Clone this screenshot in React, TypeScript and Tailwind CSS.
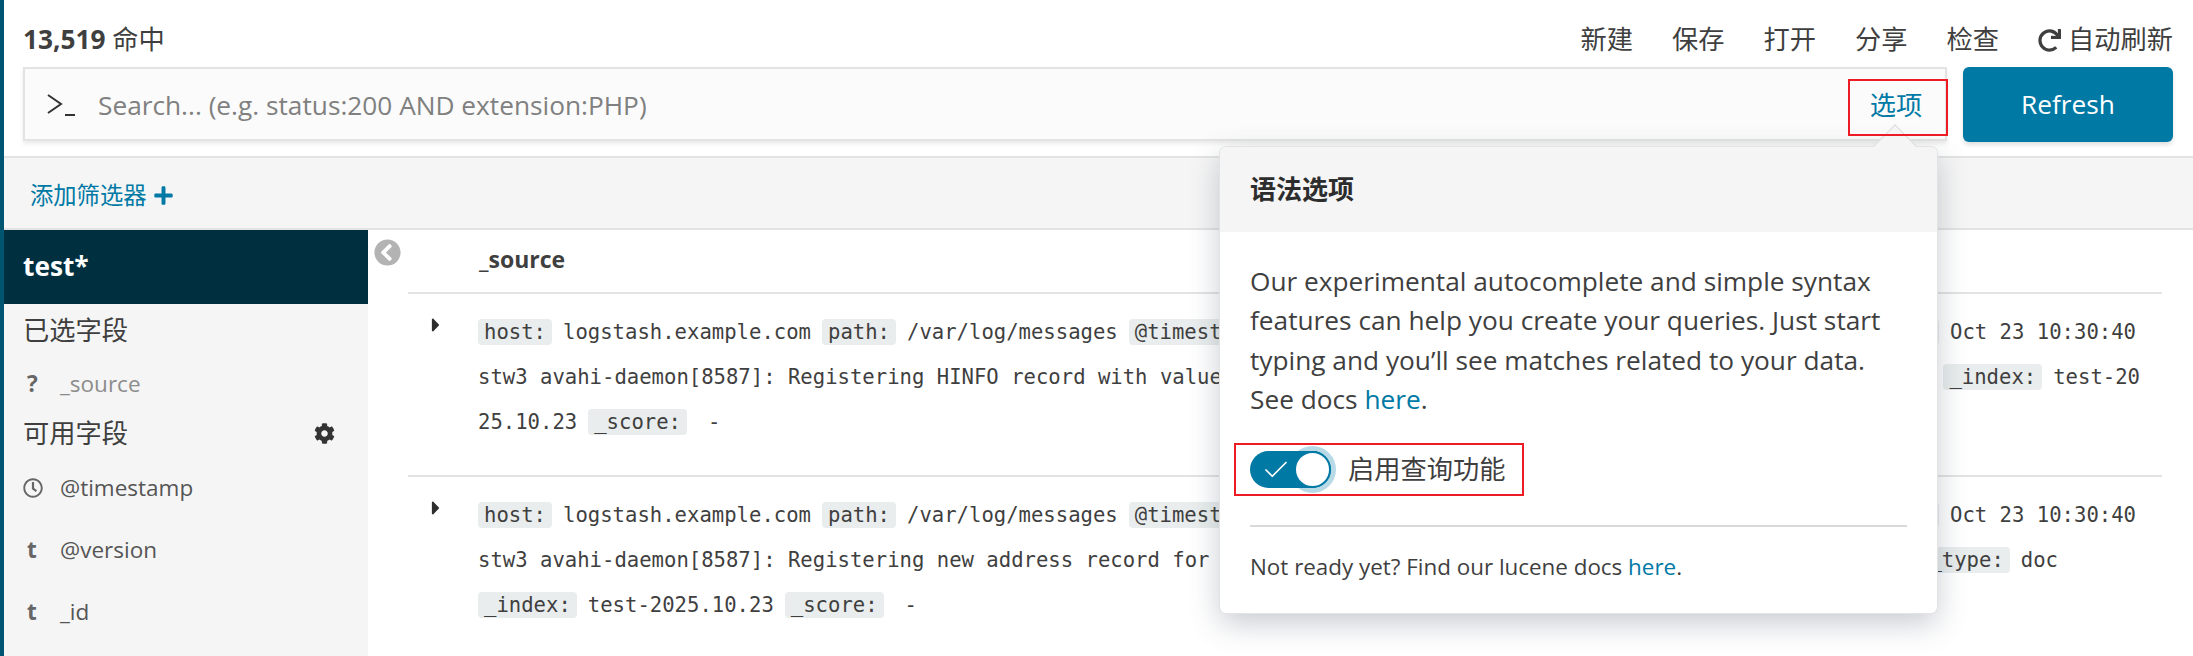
import { ReactNode } from "react"
import { Check } from "lucide-react"
import { FaCaretRight, FaChevronCircleLeft, FaCog, FaPlus, FaRedo, FaRegClock } from "react-icons/fa"

const sans = "font-['Open_Sans','Noto_Sans_CJK_SC',sans-serif]"

function Tag({ children }: { children: ReactNode }) {
  return <span className="mr-[11px] inline-flex h-[26px] items-center rounded-[4px] bg-[#e9eded] px-[6px]">{children}</span>
}

function Val({ children }: { children: ReactNode }) {
  return <span className="mr-[11px]">{children}</span>
}

function Line({ children, right, rightClass = "mr-[26px]" }: { children: ReactNode; right?: ReactNode; rightClass?: string }) {
  return (
    <div className="flex h-[45px] items-center justify-between whitespace-pre">
      <div className="flex items-center">{children}</div>
      {right && <div className={`flex items-center ${rightClass}`}>{right}</div>}
    </div>
  )
}

function Row({ children }: { children: ReactNode }) {
  return (
    <div className="flex border-b-2 border-[#e3e3e3] pt-[16px] pb-[30px]">
      <div className="w-[70px] pl-[20px] pt-[4px]">
        <FaCaretRight className="h-[22px] w-[16px] text-[#2d2d2d]" />
      </div>
      <div className="flex-1 font-['DejaVu_Sans_Mono',monospace] text-[20.6px] text-[#3f3f3f]">{children}</div>
    </div>
  )
}

function FieldItem({ icon, name, className }: { icon: ReactNode; name: string; className: string }) {
  return (
    <div className={`flex items-center pl-[23px] text-[22.5px] ${className}`}>
      <span className="flex w-[37px] items-center pl-[4px] font-bold text-[#666]">{icon}</span>
      <span>{name}</span>
    </div>
  )
}

export default function App() {
  return (
    <div className={`flex h-[656px] w-[2193px] overflow-hidden bg-white text-[#3f3f3f] ${sans}`}>
      <div className="w-[4px] shrink-0 bg-[#005571]" />
      <div className="relative flex min-w-0 flex-1 flex-col">
        <div className="h-[158px] shrink-0 border-b-2 border-[#e3e3e3] pl-[19px] pr-[20px]">
          <div className="flex h-[67px] items-center justify-between pt-[13px]">
            <div className="text-[26.25px]">
              <span className="font-bold">13,519</span> 命中
            </div>
            <div className="flex items-center gap-[39px] text-[26.25px]">
              <span>新建</span>
              <span>保存</span>
              <span>打开</span>
              <span>分享</span>
              <span>检查</span>
              <span className="flex items-center gap-[8px]">
                <FaRedo className="h-[23px] w-[23px]" />
                <span className="-ml-[1px]">自动刷新</span>
              </span>
            </div>
          </div>
          <div className="flex gap-[16px]">
            <div className="flex h-[74px] flex-1 items-center justify-between border-2 border-[#e3e3e3] bg-[#fbfbfb] pl-[22px] shadow-[0_3px_4px_rgba(0,0,0,0.08)]">
              <div className="flex items-center">
                <svg width="28" height="26" viewBox="0 0 28 26" fill="none" stroke="#333" strokeWidth="2">
                  <path d="M1 4 L14 13 L1 22" />
                  <path d="M18 24 H28" />
                </svg>
                <span className="ml-[23px] pt-[4px] text-[26.25px] text-[#808080]">Search... (e.g. status:200 AND extension:PHP)</span>
              </div>
              <div className="relative top-[3px] z-20 -mr-[3px] flex h-[57px] w-[100px] items-center justify-center border-2 border-[#ed1c24] pb-[3px] pr-[4px] text-[26.25px] text-[#0079a5]">
                选项
              </div>
            </div>
            <button className="h-[75px] w-[210px] rounded-[6px] bg-[#0079a5] text-[26.25px] text-white shadow-[0_3px_4px_rgba(0,0,0,0.12)]">Refresh</button>
          </div>
        </div>

        <div className="flex h-[72px] shrink-0 items-center gap-[7px] border-b-2 border-[#e3e3e3] bg-[#f5f5f5] pl-[26px] pt-[4px] text-[23.3px] text-[#0079a5]">
          添加筛选器
          <FaPlus className="h-[21px] w-[21px]" />
        </div>

        <div className="relative flex min-h-0 flex-1">
          <div className="w-[364px] shrink-0 bg-[#f5f5f5]">
            <div className="flex h-[74px] items-center bg-[#00303f] pl-[19px] text-[26.25px] font-bold text-white">test*</div>
            <div className="pl-[19px] pt-[7px] text-[26.25px]">已选字段</div>
            <div className="-ml-[4px] mt-[17px]">
              <FieldItem icon="?" name="_source" className="text-[#8c8c8c]" />
            </div>
            <div className="flex items-center justify-between pl-[19px] pr-[33px] pt-[13px] text-[26.25px]">
              可用字段
              <FaCog className="h-[21px] w-[21px] text-[#333]" />
            </div>
            <div className="-ml-[4px] mt-[17px] flex flex-col gap-[28px] text-[#555]">
              <FieldItem icon={<FaRegClock className="-ml-[4px] h-[20px] w-[20px]" />} name="@timestamp" className="h-[34px]" />
              <FieldItem icon="t" name="@version" className="h-[34px]" />
              <FieldItem icon="t" name="_id" className="h-[34px]" />
            </div>
          </div>

          <div className="relative min-w-0 flex-1 pl-[40px] pr-[31px]">
            <FaChevronCircleLeft className="absolute left-[6px] top-[9px] h-[27px] w-[27px] text-[#b3b3b3]" />
            <div className="flex h-[64px] items-center border-b-2 border-[#e3e3e3] pb-[4px] pl-[71px] text-[23px] font-bold">_source</div>
            <Row>
              <Line
                right={
                  <>
                    <Tag>message:</Tag>
                    <span>Oct 23 10:30:40</span>
                  </>
                }
              >
                <Tag>host:</Tag>
                <Val>logstash.example.com</Val>
                <Tag>path:</Tag>
                <Val>/var/log/messages</Val>
                <Tag>@timestamp:</Tag>
                <Val>October 23rd 2025, 10:30:40.000</Val>
              </Line>
              <Line
                rightClass="mr-[22px]"
                right={
                  <>
                    <Tag>_index:</Tag>
                    <span>test-20</span>
                  </>
                }
              >
                <Val>stw3 avahi-daemon[8587]: Registering HINFO record with values 'X86_64'/'LINUX'.</Val>
              </Line>
              <Line>
                <Val>25.10.23</Val>
                <Tag>_score:</Tag>
                <span className="ml-[10px]">-</span>
              </Line>
            </Row>
            <Row>
              <Line
                right={
                  <>
                    <Tag>message:</Tag>
                    <span>Oct 23 10:30:40</span>
                  </>
                }
              >
                <Tag>host:</Tag>
                <Val>logstash.example.com</Val>
                <Tag>path:</Tag>
                <Val>/var/log/messages</Val>
                <Tag>@timestamp:</Tag>
                <Val>October 23rd 2025, 10:30:40.000</Val>
              </Line>
              <Line
                rightClass="mr-[104px]"
                right={
                  <>
                    <Tag>_type:</Tag>
                    <span>doc</span>
                  </>
                }
              >
                <Val>stw3 avahi-daemon[8587]: Registering new address record for 192.168.1.10 on ens33.</Val>
              </Line>
              <Line>
                <Tag>_index:</Tag>
                <Val>test-2025.10.23</Val>
                <Tag>_score:</Tag>
                <span className="ml-[10px]">-</span>
              </Line>
            </Row>
          </div>
        </div>

        {/* syntax options popover */}
        <div className="absolute left-[1216px] top-[147px] z-10 h-[466px] w-[717px] rounded-[6px] bg-white shadow-[0_0_0_1px_#e3e3e3,0_10px_30px_rgba(65,78,101,0.3)]">
          <div className="absolute left-[659px] top-[-16px] h-[32px] w-[32px] rotate-45 border-l border-t border-[#dcdcdc] bg-[#f5f5f5]" />
          <div className="relative flex h-[85px] items-center rounded-t-[6px] bg-[#f5f5f5] pl-[30px] text-[26px] font-semibold text-[#2d2d2d]">语法选项</div>
          <div className="px-[30px] pt-[30px]">
            <p className="text-[26.25px] leading-[39.3px]">
              Our experimental autocomplete and simple syntax features can help you create your queries. Just start typing and you’ll see matches related to your data. See docs <span className="text-[#0079a5]">here</span>.
            </p>
            <div className="relative mt-[24px] flex h-[53px] items-center">
              <div className="absolute -left-[16px] top-0 h-[53px] w-[290px] border-2 border-[#ed1c24]" />
              <div className="flex h-[37px] w-[81px] items-center justify-between rounded-full bg-[#0079a5] pl-[11px]">
                <Check className="h-[30px] w-[30px] text-white" strokeWidth={1.4} />
                <span className="h-[37px] w-[37px] rounded-full border-2 border-[#0079a5] bg-white shadow-[0_0_0_5px_rgba(0,121,165,0.28)]" />
              </div>
              <span className="ml-[17px] text-[26.25px]">启用查询功能</span>
            </div>
            <div className="mt-[29px] border-t-2 border-[#d9d9d9] pt-[23px] text-[22.4px]">
              Not ready yet? Find our lucene docs <span className="text-[#0079a5]">here</span>.
            </div>
          </div>
        </div>
      </div>
    </div>
  )
}
